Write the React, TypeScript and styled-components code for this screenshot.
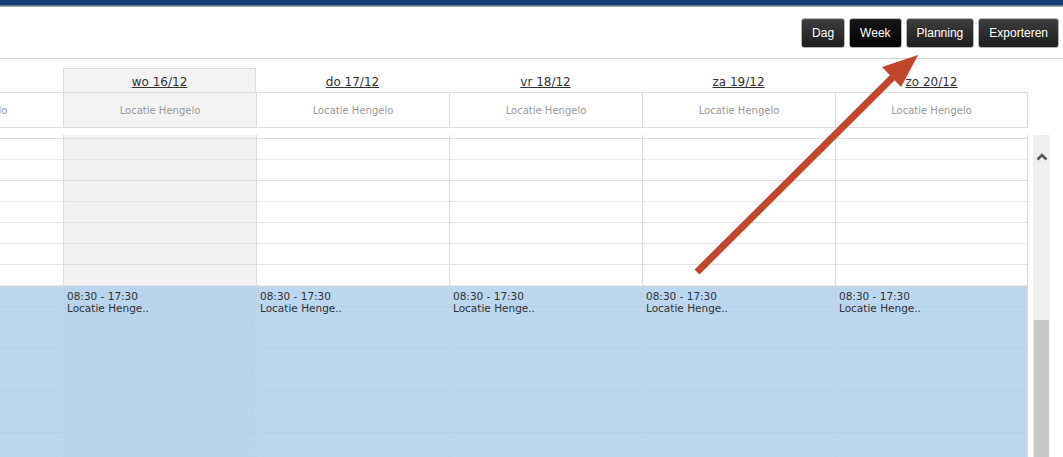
import React from 'react'
import styled, { createGlobalStyle, css } from 'styled-components'

const GlobalStyle = createGlobalStyle`
    html,
    body {
        margin: 0;
        padding: 0;
        background: #fff;
        overflow: hidden;
    }
    body {
        font-family: 'DejaVu Sans', Verdana, sans-serif;
    }
`

const COL = 193

const days = [
    { label: 'di 15/12', today: false },
    { label: 'wo 16/12', today: true },
    { label: 'do 17/12', today: false },
    { label: 'vr 18/12', today: false },
    { label: 'za 19/12', today: false },
    { label: 'zo 20/12', today: false },
]

const slots = Array.from({ length: 16 }, (_, i) => i)

const Page = styled.div`
    position: relative;
    display: flex;
    flex-direction: column;
    height: 100vh;
    overflow: hidden;
`

const TopBar = styled.div`
    height: 5px;
    flex-shrink: 0;
    background: #173f72;
    border-bottom: 1px solid #5f7389;
    box-shadow: 0 1px 0 #a9a9a9;
    margin-bottom: 1px;
`

const Toolbar = styled.div`
    height: 51px;
    flex-shrink: 0;
    display: flex;
    align-items: center;
    justify-content: flex-end;
    gap: 4px;
    padding-right: 4px;
    border-bottom: 1px solid #d6d6d6;
`

const ViewButton = styled.button<{ $active?: boolean }>`
    height: 30px;
    padding: 0 10px;
    border: 1px solid #b5b5b5;
    border-radius: 3px;
    background: linear-gradient(#3d3d3d, #1d1d1d);
    color: #fff;
    font-family: 'Liberation Sans', Arial, sans-serif;
    font-size: 12px;
    box-shadow: inset 0 1px 0 rgba(255, 255, 255, 0.08);

    ${(p) =>
        p.$active &&
        css`
            background: linear-gradient(#151515, #050505);
        `}
`

const Main = styled.div`
    flex: 1;
    display: flex;
    overflow: hidden;
`

const Calendar = styled.div`
    flex: none;
    width: ${COL * 6}px;
    margin-left: -${COL - 63}px;
    display: flex;
    flex-direction: column;
`

const HeaderRow = styled.div`
    display: grid;
    grid-template-columns: repeat(6, ${COL}px);
    margin-top: 9px;
`

const DayHead = styled.div<{ $today?: boolean }>`
    height: 24px;
    box-sizing: border-box;
    display: flex;
    align-items: center;
    justify-content: center;
    border: 1px solid transparent;
    border-bottom: none;

    ${(p) =>
        p.$today &&
        css`
            background: #f3f3f3;
            border-color: #dcdcdc;
        `}
`

const DayLink = styled.a`
    color: #333;
    font-size: 12px;
    text-decoration: underline;
    padding-top: 2px;
`

const LocationRow = styled.div`
    display: grid;
    grid-template-columns: repeat(6, ${COL}px);
    border-top: 1px solid #dcdcdc;
    border-bottom: 1px solid #dcdcdc;
`

const LocationCell = styled.div<{ $today?: boolean; $last?: boolean }>`
    height: 34px;
    box-sizing: border-box;
    display: flex;
    align-items: center;
    justify-content: center;
    border-left: 1px solid #dcdcdc;
    border-right: ${(p) => (p.$last ? '1px solid #dcdcdc' : 'none')};
    background: ${(p) => (p.$today ? '#f3f3f3' : '#fff')};
    color: #999;
    font-size: 10px;
`

const Body = styled.div`
    flex: 1;
    display: grid;
    grid-template-columns: repeat(6, ${COL}px);
    margin-top: 7px;
    overflow: hidden;
`

const DayColumn = styled.div<{ $today?: boolean; $last?: boolean }>`
    position: relative;
    box-sizing: border-box;
    border-left: 1px solid #dcdcdc;
    border-right: ${(p) => (p.$last ? '1px solid #dcdcdc' : 'none')};
    background: ${(p) => (p.$today ? '#f2f2f2' : '#fff')};
`

const SlotTail = styled.div`
    height: 3px;
`

const Slot = styled.div<{ $half?: boolean }>`
    height: 20px;
    border-top: 1px ${(p) => (p.$half ? 'dotted #dadada' : 'solid #e0e0e0')};
`

const Event = styled.div`
    position: absolute;
    top: 151px;
    left: -1px;
    right: 0;
    bottom: -40px;
    border: 1px dotted #cfd6de;
    background: rgba(171, 204, 234, 0.8);
    padding: 3px 0 0 3px;
    color: #333;
    font-size: 10.5px;
    line-height: 12px;
`

const Scrollbar = styled.div`
    width: 17px;
    margin: 76px 0 0 5px;
    background: #efefef;
    display: flex;
    flex-direction: column;
    align-items: center;
`

const ScrollUp = styled.svg`
    margin-top: 17px;
    flex-shrink: 0;
`

const Thumb = styled.div`
    width: 15px;
    height: 137px;
    margin-top: auto;
    background: #c8c8c8;
`

const Arrow = styled.svg`
    position: absolute;
    top: 0;
    left: 0;
    pointer-events: none;
`

function App() {
    return (
        <Page>
            <GlobalStyle />
            <TopBar />
            <Toolbar>
                <ViewButton>Dag</ViewButton>
                <ViewButton $active>Week</ViewButton>
                <ViewButton>Planning</ViewButton>
                <ViewButton>Exporteren</ViewButton>
            </Toolbar>
            <Main>
                <Calendar>
                    <HeaderRow>
                        {days.map((d) => (
                            <DayHead key={d.label} $today={d.today}>
                                <DayLink>{d.label}</DayLink>
                            </DayHead>
                        ))}
                    </HeaderRow>
                    <LocationRow>
                        {days.map((d, i) => (
                            <LocationCell
                                key={d.label}
                                $today={d.today}
                                $last={i === days.length - 1}
                            >
                                Locatie Hengelo
                            </LocationCell>
                        ))}
                    </LocationRow>
                    <Body>
                        {days.map((d, i) => (
                            <DayColumn
                                key={d.label}
                                $today={d.today}
                                $last={i === days.length - 1}
                            >
                                <SlotTail />
                                {slots.map((s) => (
                                    <Slot key={s} $half={s % 2 === 1} />
                                ))}
                                <Event>
                                    08:30 - 17:30
                                    <br />
                                    Locatie Henge..
                                </Event>
                            </DayColumn>
                        ))}
                    </Body>
                </Calendar>
                <Scrollbar>
                    <ScrollUp width="12" height="9" viewBox="0 0 12 9">
                        <path
                            d="M1.5 7.5 L6 3 L10.5 7.5"
                            fill="none"
                            stroke="#555"
                            strokeWidth="2.6"
                        />
                    </ScrollUp>
                    <Thumb />
                </Scrollbar>
            </Main>
            <Arrow width="1063" height="457" viewBox="0 0 1063 457">
                <line
                    x1="697"
                    y1="272"
                    x2="894"
                    y2="76"
                    stroke="#c1462d"
                    strokeWidth="7"
                />
                <polygon points="918,55 882,67 901,87" fill="#c1462d" />
            </Arrow>
        </Page>
    )
}

export default App
